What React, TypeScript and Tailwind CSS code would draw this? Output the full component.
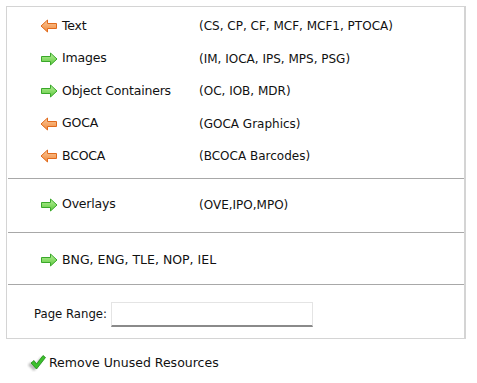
import React from "react";

const LeftArrow = () => (
  <svg width="18" height="14" viewBox="0 0 18 14" className="shrink-0">
    <defs>
      <linearGradient id="og" x1="0" y1="0" x2="0" y2="1">
        <stop offset="0" stopColor="#fbc89a" />
        <stop offset="1" stopColor="#f08a3c" />
      </linearGradient>
    </defs>
    <path d="M1 7 L7.5 1 L7.5 4.5 L16.5 4.5 L16.5 9.5 L7.5 9.5 L7.5 13 Z" fill="url(#og)" stroke="#e06a1c" strokeWidth="1" strokeLinejoin="round" />
  </svg>
);

const RightArrow = () => (
  <svg width="18" height="14" viewBox="0 0 18 14" className="shrink-0">
    <defs>
      <linearGradient id="gg" x1="0" y1="0" x2="0" y2="1">
        <stop offset="0" stopColor="#b8f09a" />
        <stop offset="1" stopColor="#5cc83c" />
      </linearGradient>
    </defs>
    <path d="M17 7 L10.5 1 L10.5 4.5 L1.5 4.5 L1.5 9.5 L10.5 9.5 L10.5 13 Z" fill="url(#gg)" stroke="#3aa82a" strokeWidth="1" strokeLinejoin="round" />
  </svg>
);

const Check = () => (
  <svg width="20" height="18" viewBox="0 0 20 18" className="shrink-0">
    <defs>
      <filter id="blur" x="-50%" y="-50%" width="200%" height="200%">
        <feGaussianBlur stdDeviation="1.2" />
      </filter>
    </defs>
    <path d="M2 10 L5 7 L8 11 L15 2 L17 4 L8 16 Z" fill="#888" opacity="0.6" filter="url(#blur)" transform="translate(-1,1)" />
    <path d="M4 9 L7 6.5 L9.5 10 L16 1.5 L18.5 3.5 L9.5 15 Z" fill="#3cc02c" stroke="#1e8a16" strokeWidth="0.8" strokeLinejoin="round" />
  </svg>
);

const rows: { dir: "l" | "r"; label: string; desc: string }[] = [
  { dir: "l", label: "Text", desc: "(CS, CP, CF, MCF, MCF1, PTOCA)" },
  { dir: "r", label: "Images", desc: "(IM, IOCA, IPS, MPS, PSG)" },
  { dir: "r", label: "Object Containers", desc: "(OC, IOB, MDR)" },
  { dir: "l", label: "GOCA", desc: "(GOCA Graphics)" },
  { dir: "l", label: "BCOCA", desc: "(BCOCA Barcodes)" },
];

const Row = ({ dir, label, desc }: { dir: "l" | "r"; label: string; desc: string }) => (
  <div className="flex items-center h-[32.5px]">
    <div className="flex items-center w-[192px] pl-[33px] gap-[4px]">
      {dir === "l" ? <LeftArrow /> : <RightArrow />}
      <span className="text-[12.5px] tracking-[-0.2px] text-[#111]">{label}</span>
    </div>
    <span className="text-[12px] text-[#111]">{desc}</span>
  </div>
);

export default function App() {
  return (
    <div className="w-[477px] h-[383px] bg-white" style={{ fontFamily: "'DejaVu Sans', Tahoma, sans-serif" }}>
      <div className="pt-[6px] pl-[6px]">
        <div className="w-[460px] border border-[#d4d4d4] border-r-2">
          <div className="pt-[3px] pb-[5px]">
            {rows.map((r) => (
              <Row key={r.label} {...r} />
            ))}
          </div>
          <div className="ml-[1px] h-px bg-[#a8a8a8]" />
          <div className="pt-[10px] pb-[11px]">
            <Row dir="r" label="Overlays" desc="(OVE,IPO,MPO)" />
          </div>
          <div className="ml-[1px] h-px bg-[#a8a8a8]" />
          <div className="flex items-center h-[51px] pt-[3px] pl-[33px] gap-[4px]">
            <RightArrow />
            <span className="text-[12.5px] text-[#111]">BNG, ENG, TLE, NOP, IEL</span>
          </div>
          <div className="ml-[1px] h-px bg-[#a8a8a8]" />
          <div className="flex items-center h-[53px] pt-[6px] pl-[27px]">
            <span className="text-[11.7px] text-[#111] w-[77px]">Page Range:</span>
            <div className="w-[202px] h-[25px] border border-[#e4e4e4] border-b-2 border-b-[#8a8a8a] bg-white" />
          </div>
        </div>
        <div className="flex items-center pl-[21px] mt-[15px] gap-[2px]">
          <Check />
          <span className="text-[12.5px] text-[#111]">Remove Unused Resources</span>
        </div>
      </div>
    </div>
  );
}
